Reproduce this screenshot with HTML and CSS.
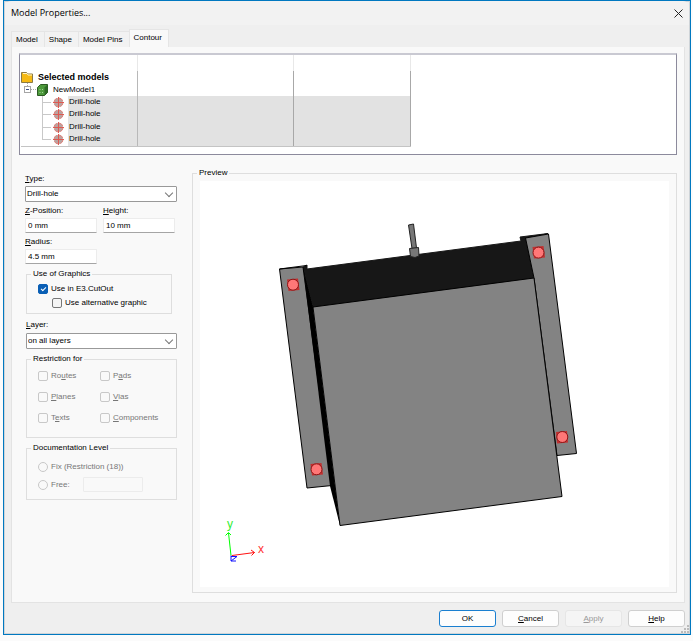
FILE: index.html
```html
<!DOCTYPE html>
<html lang="en">
<head>
    <meta charset="UTF-8">
    <meta name="viewport" content="width=device-width, initial-scale=1.0">
    <title>Model Properties...</title>
    <link rel="stylesheet" href="styles.css">
</head>
<body>
    <!-- Shared icons -->
    <svg class="icon-defs" aria-hidden="true">
        <symbol id="drill" viewBox="0 0 11 11">
            <circle cx="5.5" cy="5.5" r="4.5" fill="#b9a3a1" stroke="#e0837c" stroke-dasharray="5 2"/>
            <path d="M5.500 0v11M0 5.500h11" stroke="#de5a52" fill="none"/>
        </symbol>
    </svg>

    <div class="window">
        <header class="titlebar">
            <h1>Model Properties...</h1>
            <button class="close" aria-label="Close">
                <svg width="9" height="9" viewBox="0 0 9 9"><path d="M.5.5l8 8M8.500.5l-8 8" stroke="#222" fill="none"/></svg>
            </button>
        </header>

        <nav class="tabs">
            <button class="tab">Model</button>
            <button class="tab">Shape</button>
            <button class="tab">Model Pins</button>
            <button class="tab active">Contour</button>
        </nav>

        <main class="panel">
            <div class="tree">
                <table>
                    <thead>
                        <tr><th></th><th class="wide"></th><th></th></tr>
                    </thead>
                    <tbody>
                        <tr>
                            <td><div class="node root">
                                <svg width="12" height="12" viewBox="0 0 12 12"><path d="M.5 11.500v-10h5l1 1.500h5v8.500z" fill="#f5b914" stroke="#8a7a45"/><path d="M2 2.500h4l1 1.500h4" stroke="#fff3c4" fill="none"/></svg>
                                <b>Selected models</b>
                            </div></td>
                            <td></td><td></td>
                        </tr>
                        <tr>
                            <td><div class="node model">
                                <svg width="13" height="13" viewBox="0 0 13 13"><path d="M3.500 0v3M7 6.500h6" stroke="#aaa" stroke-dasharray="1 1"/><rect x=".5" y="3.500" width="6" height="6" fill="#fff" stroke="#a5a5a5"/><path d="M2 6.500h3" stroke="#3d4f8a"/></svg>
                                <svg width="11" height="12" viewBox="0 0 11 12"><path d="M.5 3.500l3-3h7v8l-3 3h-7z" fill="#4d9a3c" stroke="#2c5a23"/><path d="M7.500 3.500v8l3-3v-8z" fill="#2f6b26"/><path d="M2.500 5.500h1M5 5.500h1M2.500 8.500h1M5 8.500h1" stroke="#a5d69a"/></svg>
                                <span>NewModel1</span>
                            </div></td>
                            <td></td><td></td>
                        </tr>
                        <tr class="selected">
                            <td><div class="node hole"><svg width="11" height="11"><use href="#drill"/></svg><span>Drill-hole</span></div></td>
                            <td></td><td></td>
                        </tr>
                        <tr class="selected">
                            <td><div class="node hole"><svg width="11" height="11"><use href="#drill"/></svg><span>Drill-hole</span></div></td>
                            <td></td><td></td>
                        </tr>
                        <tr class="selected">
                            <td><div class="node hole"><svg width="11" height="11"><use href="#drill"/></svg><span>Drill-hole</span></div></td>
                            <td></td><td></td>
                        </tr>
                        <tr class="selected">
                            <td><div class="node hole"><svg width="11" height="11"><use href="#drill"/></svg><span>Drill-hole</span></div></td>
                            <td></td><td></td>
                        </tr>
                    </tbody>
                </table>
            </div>

            <div class="columns">
                <form class="settings">
                    <div class="field">
                        <label for="type"><u>T</u>ype:</label>
                        <div class="select"><select id="type"><option>Drill-hole</option></select></div>
                    </div>

                    <div class="field-row">
                        <div class="field">
                            <label for="zpos"><u>Z</u>-Position:</label>
                            <input type="text" id="zpos" value="0 mm">
                        </div>
                        <div class="field">
                            <label for="height"><u>H</u>eight:</label>
                            <input type="text" id="height" value="10 mm">
                        </div>
                        <div class="field">
                            <label for="radius"><u>R</u>adius:</label>
                            <input type="text" id="radius" value="4.5 mm">
                        </div>
                    </div>

                    <fieldset class="graphics">
                        <legend>Use of Graphics</legend>
                        <label class="check"><input type="checkbox" checked> Use in E3.CutOut</label>
                        <label class="check nested"><input type="checkbox"> Use alternative graphic</label>
                    </fieldset>

                    <div class="field layer">
                        <label for="layer"><u>L</u>ayer:</label>
                        <div class="select"><select id="layer"><option>on all layers</option></select></div>
                    </div>

                    <fieldset class="restriction">
                        <legend>Restriction for</legend>
                        <label class="check"><input type="checkbox" disabled><span>Ro<u>u</u>tes</span></label>
                        <label class="check"><input type="checkbox" disabled><span>P<u>a</u>ds</span></label>
                        <label class="check"><input type="checkbox" disabled><span><u>P</u>lanes</span></label>
                        <label class="check"><input type="checkbox" disabled><span><u>V</u>ias</span></label>
                        <label class="check"><input type="checkbox" disabled><span>T<u>e</u>xts</span></label>
                        <label class="check"><input type="checkbox" disabled><span><u>C</u>omponents</span></label>
                    </fieldset>

                    <fieldset class="level">
                        <legend>Documentation Level</legend>
                        <label class="check"><input type="radio" name="level" disabled> Fix (Restriction (18))</label>
                        <div class="free">
                            <label class="check"><input type="radio" name="level" disabled> Free:</label>
                            <input type="text" aria-label="Free level" disabled>
                        </div>
                    </fieldset>
                </form>

                <fieldset class="preview">
                    <legend>Preview</legend>
                    <svg class="scene" viewBox="200 181 469 406">
                        <!-- Housing with mounting flanges -->
                        <g stroke="#000" stroke-linejoin="round">
                            <path d="M303 267l4-2v4l214-28-1-4 28-3.500-22 5 8 40-221 29z" fill="#171717" stroke="#171717"/>
                            <path d="M279.500 269L303 267 332 485.500 307 488z" fill="#838383"/>
                            <path d="M279.500 269l27-3.500" fill="none"/>
                            <path d="M525.500 238L548.500 234 576.500 453.500 557 455.500 534 278z" fill="#838383"/>
                            <path d="M303 267L313 307 340 525.500 330 486z" fill="#000" stroke="none"/>
                            <path d="M313 307L534 278 562 496.500 340 525.500z" fill="#838383"/>
                        </g>
                        <!-- Connector pin -->
                        <g fill="#777" stroke="#222">
                            <path d="M408.500 225l5-1 3 24-4.500.5z"/>
                            <path d="M409.500 248.500l9-1 .5 8.500-4 1.500-4.500-1z"/>
                        </g>
                        <!-- Drill-holes -->
                        <g fill="#ff7777" stroke="#8c1414">
                            <path d="M287 279.500l11-1 1.500 11.500-11 1zM532.500 247l11-1 1.500 11.500-11 1zM310.500 464l11-1 1.500 11.500-11 1zM556 432l11-1 1 11.500-11 1z" fill="#c23030" stroke="none"/>
                            <circle cx="293" cy="284.700" r="5.500"/>
                            <circle cx="538.500" cy="252.600" r="5.500"/>
                            <circle cx="316.500" cy="469.300" r="5.500"/>
                            <circle cx="562.300" cy="437" r="5.500"/>
                        </g>
                        <!-- Axes -->
                        <g fill="none">
                            <path d="M231 555.500l-2.500-22.500M225.500 535.500l3-3 2.500 2.500" stroke="#0f0"/>
                            <path d="M232 555.500l22.500-3M251 550l3.500 2.500-3 3" stroke="#f11"/>
                            <path d="M231 555.500v5.500M231 556.500h6l-6 4.500h5" stroke="#11f"/>
                        </g>
                        <text class="axis-y" x="227" y="528">y</text>
                        <text class="axis-x" x="258" y="553">x</text>
                    </svg>
                </fieldset>
            </div>
        </main>

        <footer class="actions">
            <button class="default">OK</button>
            <button><u>C</u>ancel</button>
            <button disabled><u>A</u>pply</button>
            <button><u>H</u>elp</button>
            <svg class="grip" width="8" height="8" viewBox="0 0 8 8"><path d="M6 0h2v2h-2zM3 3h2v2h-2zM6 3h2v2h-2zM0 6h2v2h-2zM3 6h2v2h-2zM6 6h2v2h-2z" fill="#bbb"/></svg>
        </footer>
    </div>
</body>
</html>
```

FILE: styles.css
```css
/* Reset and base styles */
* {
    margin: 0;
    padding: 0;
    box-sizing: border-box;
}

body {
    min-height: 100vh;
    display: flex;
    padding: 0 2px 6px 3px;
    background: #fbfbfb;
    font-family: "Liberation Sans", Arial, sans-serif;
    font-size: 8px;
    line-height: 12px;
    color: #000;
}

button, input, select {
    font: inherit;
    color: inherit;
}

.icon-defs {
    position: absolute;
    width: 0;
    height: 0;
}

/* Window frame */
.window {
    flex: 1;
    display: flex;
    flex-direction: column;
    border: 1px solid #0078c0;
    background: #efefef;
    box-shadow: inset 0 0 0 1px #cfd4d8;
}

.titlebar {
    display: flex;
    justify-content: space-between;
    align-items: center;
    height: 24px;
    margin: 0 1px;
    padding: 0 6px;
    background: #f2f2f2;
    border-radius: 6px 6px 0 0;
}

.titlebar h1 {
    font: 9px/14px "Open Sans", sans-serif;
}

.close {
    display: flex;
    border: none;
    background: none;
}

/* Tabs */
.tabs {
    display: flex;
    align-items: flex-end;
    height: 22px;
    padding: 0 7px;
}

.tab {
    height: 16px;
    padding: 0 6px 0 4px;
    border: 1px solid #e5e5e5;
    border-right: none;
    border-bottom: none;
    background: #f2f2f2;
    white-space: nowrap;
}

.tab.active {
    height: 18px;
    padding-bottom: 2px;
    border-right: 1px solid #e5e5e5;
    background: #f9f9f9;
}

/* Contour page */
.panel {
    flex: 1;
    display: flex;
    flex-direction: column;
    margin: 0 5px 0 7px;
    padding: 6px 7px 9px;
    border: 1px solid #e3e3e3;
    border-top: none;
    background: #f9f9f9;
}

.tree {
    height: 102px;
    border: 1px solid #8c8a9c;
    border-top: 2px solid #c9c9d2;
    background: #fff;
}

table {
    width: 390px;
    margin-left: 1px;
    table-layout: fixed;
    border-collapse: separate;
    border-spacing: 0;
    border-bottom: 1px solid #c4c4c4;
}

th {
    width: 117px;
    height: 16px;
    border-right: 1px solid #e8e8e8;
}

th.wide {
    width: 156px;
}

td {
    height: 12px;
    border-right: 1px solid #a8a8a8;
    vertical-align: middle;
}

tr:nth-child(even) td {
    height: 13px;
}

td:first-child {
    border-right-color: #b8b8b8;
}

.selected td + td {
    background: #e2e2e2;
}

.node {
    display: flex;
    align-items: center;
    height: 12px;
    white-space: nowrap;
}

.root {
    gap: 5px;
}

.root b {
    font-size: 9px;
}

.model {
    padding-left: 3px;
}

.model span {
    padding-left: 5px;
}

.hole {
    height: 100%;
    padding-left: 32px;
    background: linear-gradient(#c8c8c8, #c8c8c8) 22px 6px / 8px 1px no-repeat,
                linear-gradient(#c8c8c8, #c8c8c8) 21px 0 / 1px 100% no-repeat;
}

tr:last-child .hole {
    background-size: 8px 1px, 1px 7px;
}

.hole span {
    flex: 1;
    align-self: stretch;
    margin-left: 4px;
    padding-left: 1px;
    background: #e2e2e2;
}

/* Form */
.columns {
    flex: 1;
    display: flex;
    gap: 15px;
    margin-top: 12px;
}

.settings {
    width: 152px;
    margin-left: 6px;
    padding-top: 6px;
}

.field label {
    display: block;
    height: 13px;
}

.select {
    position: relative;
}

.select::after {
    content: "";
    position: absolute;
    top: 4px;
    right: 5px;
    width: 5px;
    height: 5px;
    border: solid #777;
    border-width: 0 1px 1px 0;
    transform: rotate(45deg);
    pointer-events: none;
}

select {
    appearance: none;
    display: block;
    width: 100%;
    height: 16px;
    padding-left: 1px;
    border: 1px solid #999;
    border-radius: 1px;
    background: #fff;
}

.field-row {
    display: grid;
    grid-template-columns: 72px 72px;
    gap: 3px 6px;
    margin-top: 3px;
}

input[type="text"] {
    display: block;
    width: 100%;
    height: 15px;
    padding: 0 2px;
    border: 1px solid #ececec;
    border-bottom-color: #a5a5a5;
    border-radius: 1px;
    background: #fff;
}

/* Group boxes */
fieldset {
    border: 1px solid #dedede;
}

legend {
    height: 12px;
    margin-left: -7px;
    padding: 0 2px;
}

.check {
    display: flex;
    align-items: center;
    gap: 3px;
    height: 14px;
    white-space: nowrap;
}

.check input {
    appearance: none;
    flex: none;
    position: relative;
    width: 10px;
    height: 10px;
    border: 1px solid #777;
    border-radius: 2px;
    background: #f5f5f5;
}

.check input[type="radio"] {
    border-radius: 50%;
}

.check input:checked {
    border-color: #0a5fb5;
    background: #0a5fb5;
}

.check input:checked::after {
    content: "";
    position: absolute;
    top: 2px;
    left: 2px;
    width: 4px;
    height: 2px;
    border: solid #fff;
    border-width: 0 0 1px 1px;
    transform: rotate(-45deg);
}

.check input:disabled {
    border-color: #c8c8c8;
    background: #f9f9f9;
}

.check:has(input:disabled) {
    color: #777;
}

.graphics {
    width: 146px;
    margin: 4px 0 0 1px;
    padding: 2px 0 3px 11px;
}

.nested {
    margin-left: 14px;
}

.layer, .restriction, .level {
    width: 151px;
    margin-left: 1px;
}

.layer {
    margin-top: 5px;
}

.layer label {
    height: 14px;
}

.restriction {
    display: grid;
    grid-template-columns: 62px auto;
    row-gap: 7px;
    margin-top: 4px;
    padding: 4px 0 12px 11px;
}

.level {
    margin-top: 4px;
    padding: 6px 0 7px 11px;
}

.free {
    display: flex;
    align-items: center;
    gap: 13px;
    margin-top: 3px;
}

.free input[type="text"] {
    width: 60px;
    border-color: #ececec;
    background: #f9f9f9;
}

/* Preview */
.preview {
    flex: 1;
    display: flex;
    min-width: 0;
    padding: 2px 7px 5px;
}

.preview legend {
    margin-left: -3px;
}

.scene {
    display: block;
    width: 100%;
    height: 100%;
    background: #fff;
}

.axis-x, .axis-y {
    font-size: 12px;
    fill: #f33;
}

.axis-y {
    fill: #3e3;
}

/* Footer buttons */
.actions {
    position: relative;
    display: flex;
    justify-content: flex-end;
    gap: 6px;
    padding: 7px 5px 7px;
}

.actions button {
    width: 57px;
    height: 17px;
    border: 1px solid #cfcfcf;
    border-radius: 3px;
    background: #fdfdfd;
}

.actions .default {
    border-color: #1a7fd0;
}

.actions button:disabled {
    border-color: #e6e6e6;
    background: #f5f5f5;
    color: #999;
}

.grip {
    position: absolute;
    right: 1px;
    bottom: 1px;
}
```
